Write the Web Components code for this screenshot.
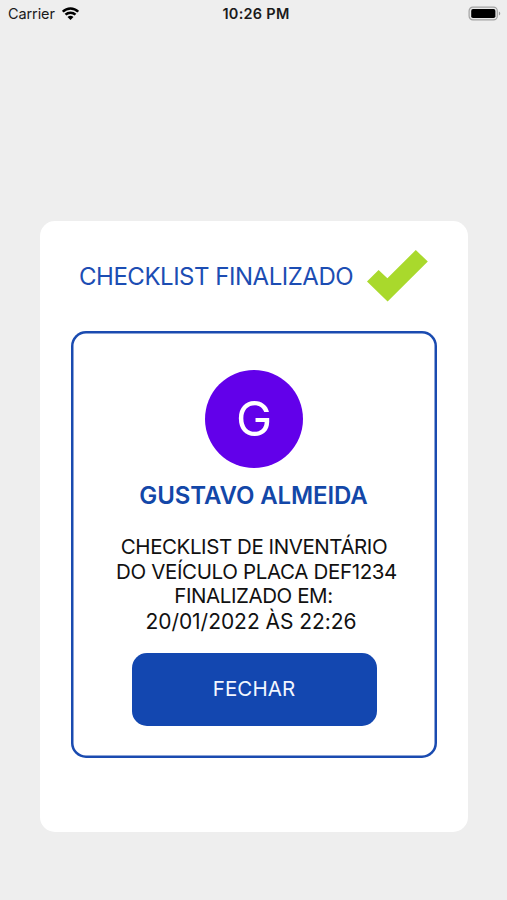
<!DOCTYPE html>
<html lang="pt-BR"><head><meta charset="utf-8"><title>Checklist finalizado</title>
<style>html,body{margin:0;height:100%;background:#eee;font-family:Inter,"Liberation Sans",sans-serif;-webkit-font-smoothing:antialiased}</style></head>
<body>
<checklist-screen></checklist-screen>
<script>
const define = (name, html) => customElements.define(name, class extends HTMLElement {
  constructor() {
    super();
    this.attachShadow({ mode: 'open' }).innerHTML = html;
  }
});

define('status-bar', `
<style>
:host{display:grid;grid-template-columns:1fr auto 1fr;align-items:center;height:28px;padding:0 6px 0 8px;box-sizing:border-box;color:#1a1a1a;font-size:14.5px;line-height:28px;white-space:nowrap}
.left{display:flex;align-items:center;gap:7px}
.carrier{letter-spacing:-.1px}
.time{font-weight:600;letter-spacing:.27px;padding-left:3px}
.battery{justify-self:end}
svg{display:block}
.left svg{position:relative;top:-1px}
</style>
<div class="left"><span class="carrier">Carrier</span>
<svg width="17" height="13" viewBox="0 0 17 13" fill="none" stroke="#000" stroke-width="2.5"><path d="M.8 4.7C5.1.4 11.9.4 16.2 4.7M3.5 7.7c2.8-2.7 7.2-2.7 10 0"/><path d="M5.5 9.9q3-2.3 6 0L8.5 12.9Z" fill="#000" stroke="none"/></svg></div>
<span class="time">10:26 PM</span>
<svg class="battery" width="33" height="16" viewBox="0 0 33 16"><rect x="1.1" y="1.1" width="28.2" height="12.8" rx="3.8" fill="#e9e9e9" stroke="#a2a2a2" stroke-width="1.2"/><rect x="3.2" y="3.1" width="24.2" height="8.9" rx="1.8" fill="#000"/><path d="M30.9 5.5c1.8.6 1.8 3.4 0 4z" fill="#999"/></svg>`);

define('check-mark', `
<style>:host{display:block;width:62px;height:54px}svg{display:block}</style>
<svg width="62" height="54" viewBox="0 0 62 54"><path d="M1 32.5 12.6 21l8.8 8.3L49.8 1l12 11.6-40.2 40z" fill="#a9d92c"/></svg>`);

define('user-avatar', `
<style>:host{display:block;width:98px;height:98px;border-radius:50%;background:#6200ea;color:#fff;text-align:center;font-size:48.5px;line-height:98px;font-weight:400}</style><slot></slot>`);

define('action-button', `
<style>
:host{display:block}
button{display:block;width:245px;height:73px;margin:0;padding:0 0 2px;border:0;border-radius:15px;background:#1347b0;color:#f2f6ff;font:400 20.5px/71px Inter,sans-serif;letter-spacing:.1px}
</style><button type="button"><slot></slot></button>`);

define('text-line', `
<style>:host{display:block;height:25px;line-height:25px;white-space:nowrap;letter-spacing:-.35px}</style><slot></slot>`);

define('result-panel', `
<style>
:host{display:flex;flex-direction:column;align-items:center;width:366px;height:427px;padding-top:39px;box-sizing:border-box;border-radius:15px;box-shadow:inset 0 0 0 2.5px #1a4bb0}
.name{margin-top:13px;font-size:24px;line-height:30px;font-weight:600;letter-spacing:-.1px;color:#1347a8;white-space:nowrap;padding-right:1px}
.body{margin-top:23px;font-size:20.5px;color:#111;text-align:center;padding-left:5px}
action-button{margin-top:19px}
</style>
<user-avatar>G</user-avatar>
<div class="name"><slot name="name"></slot></div>
<div class="body"><slot></slot></div>
<action-button><slot name="action"></slot></action-button>`);

define('dialog-card', `
<style>
:host{display:flex;flex-direction:column;width:428px;height:611px;box-sizing:border-box;padding:28px 31px 0;border-radius:15px;background:#fff}
header{display:flex;align-items:center;gap:13px;height:54px;padding-left:8px;margin-bottom:28px;color:#1c4db3;font-size:24px;letter-spacing:-.48px;line-height:54px;white-space:nowrap}
.title{width:274px;padding-top:2px}
</style>
<header><span class="title"><slot name="title"></slot></span><check-mark></check-mark></header>
<slot></slot>`);

define('checklist-screen', `
<style>
:host{display:flex;flex-direction:column;height:900px;width:507px;background:#eee;overflow:hidden}
dialog-card{margin:193px 0 0 40px}
.first{letter-spacing:-.43px;padding-right:5px}
.third{letter-spacing:-.42px;line-height:24px;padding-right:6px}
.date{font-size:21px;letter-spacing:-.04px;padding-right:11px}
</style>
<status-bar></status-bar>
<dialog-card><span slot="title">CHECKLIST FINALIZADO</span>
<result-panel><span slot="name">GUSTAVO ALMEIDA</span>
<text-line class="first">CHECKLIST DE INVENTÁRIO</text-line>
<text-line>DO VEÍCULO PLACA DEF1234</text-line>
<text-line class="third">FINALIZADO EM:</text-line>
<text-line class="date">20/01/2022 ÀS 22:26</text-line>
<span slot="action">FECHAR</span></result-panel></dialog-card>`);
</script></body></html>
